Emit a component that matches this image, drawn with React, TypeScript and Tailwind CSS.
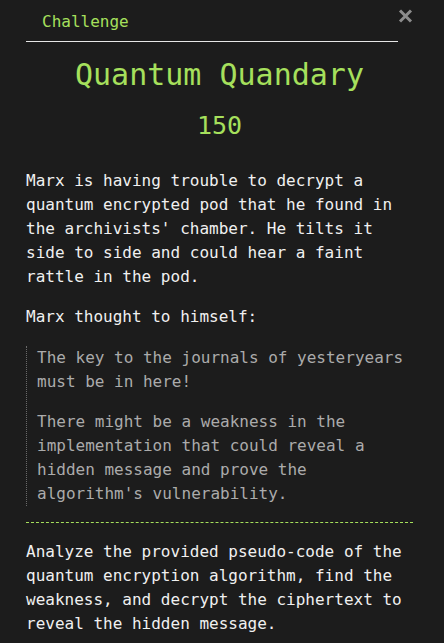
export default function App() {
  return (
    <div className="min-h-screen w-full bg-[#1c1c1c] font-['DejaVu_Sans_Mono',monospace] text-[16px] leading-[24px]">
      <div className="pl-[26px] w-[413px]">
        <div className="flex items-start">
          <div className="flex-1 h-[42px] border-b border-[#e6e6e6] pl-[16px] pt-[10px] text-[#a6e05c]">
            Challenge
          </div>
          <div className="w-[15px] h-[14px] mt-[9px]">
            <svg width="15" height="14" viewBox="0 0 15 14">
              <path d="M2 1.5 L13 12.5 M13 1.5 L2 12.5" stroke="#8c8c8c" strokeWidth="3" strokeLinecap="butt" />
            </svg>
          </div>
        </div>
        <h1 className="mt-[15px] text-center text-[30px] leading-[36px] text-[#a6e05c]">Quantum Quandary</h1>
        <div className="mt-[17px] text-center text-[25px] leading-[32px] text-[#a6e05c]">150</div>
        <div className="mt-[27px] text-[#f0f0f0]">
          <p>
            Marx is having trouble to decrypt a quantum encrypted pod that he found in the archivists' chamber. He tilts it side to side and could hear a faint rattle in the pod.
          </p>
          <p className="mt-[16px]">Marx thought to himself:</p>
          <blockquote className="mt-[17px] border-l border-dotted border-l-[#6a6a6a] pl-[10px] text-[#ababab]">
            <p>The key to the journals of yesteryears must be in here!</p>
            <p className="mt-[16px]">
              There might be a weakness in the implementation that could reveal a hidden message and prove the algorithm's vulnerability.
            </p>
          </blockquote>
          <div className="mt-[16px] h-0 border-t border-dashed border-t-[#a6e05c]"></div>
          <p className="mt-[17px]">
            Analyze the provided pseudo-code of the quantum encryption algorithm, find the weakness, and decrypt the ciphertext to reveal the hidden message.
          </p>
        </div>
      </div>
    </div>
  );
}
